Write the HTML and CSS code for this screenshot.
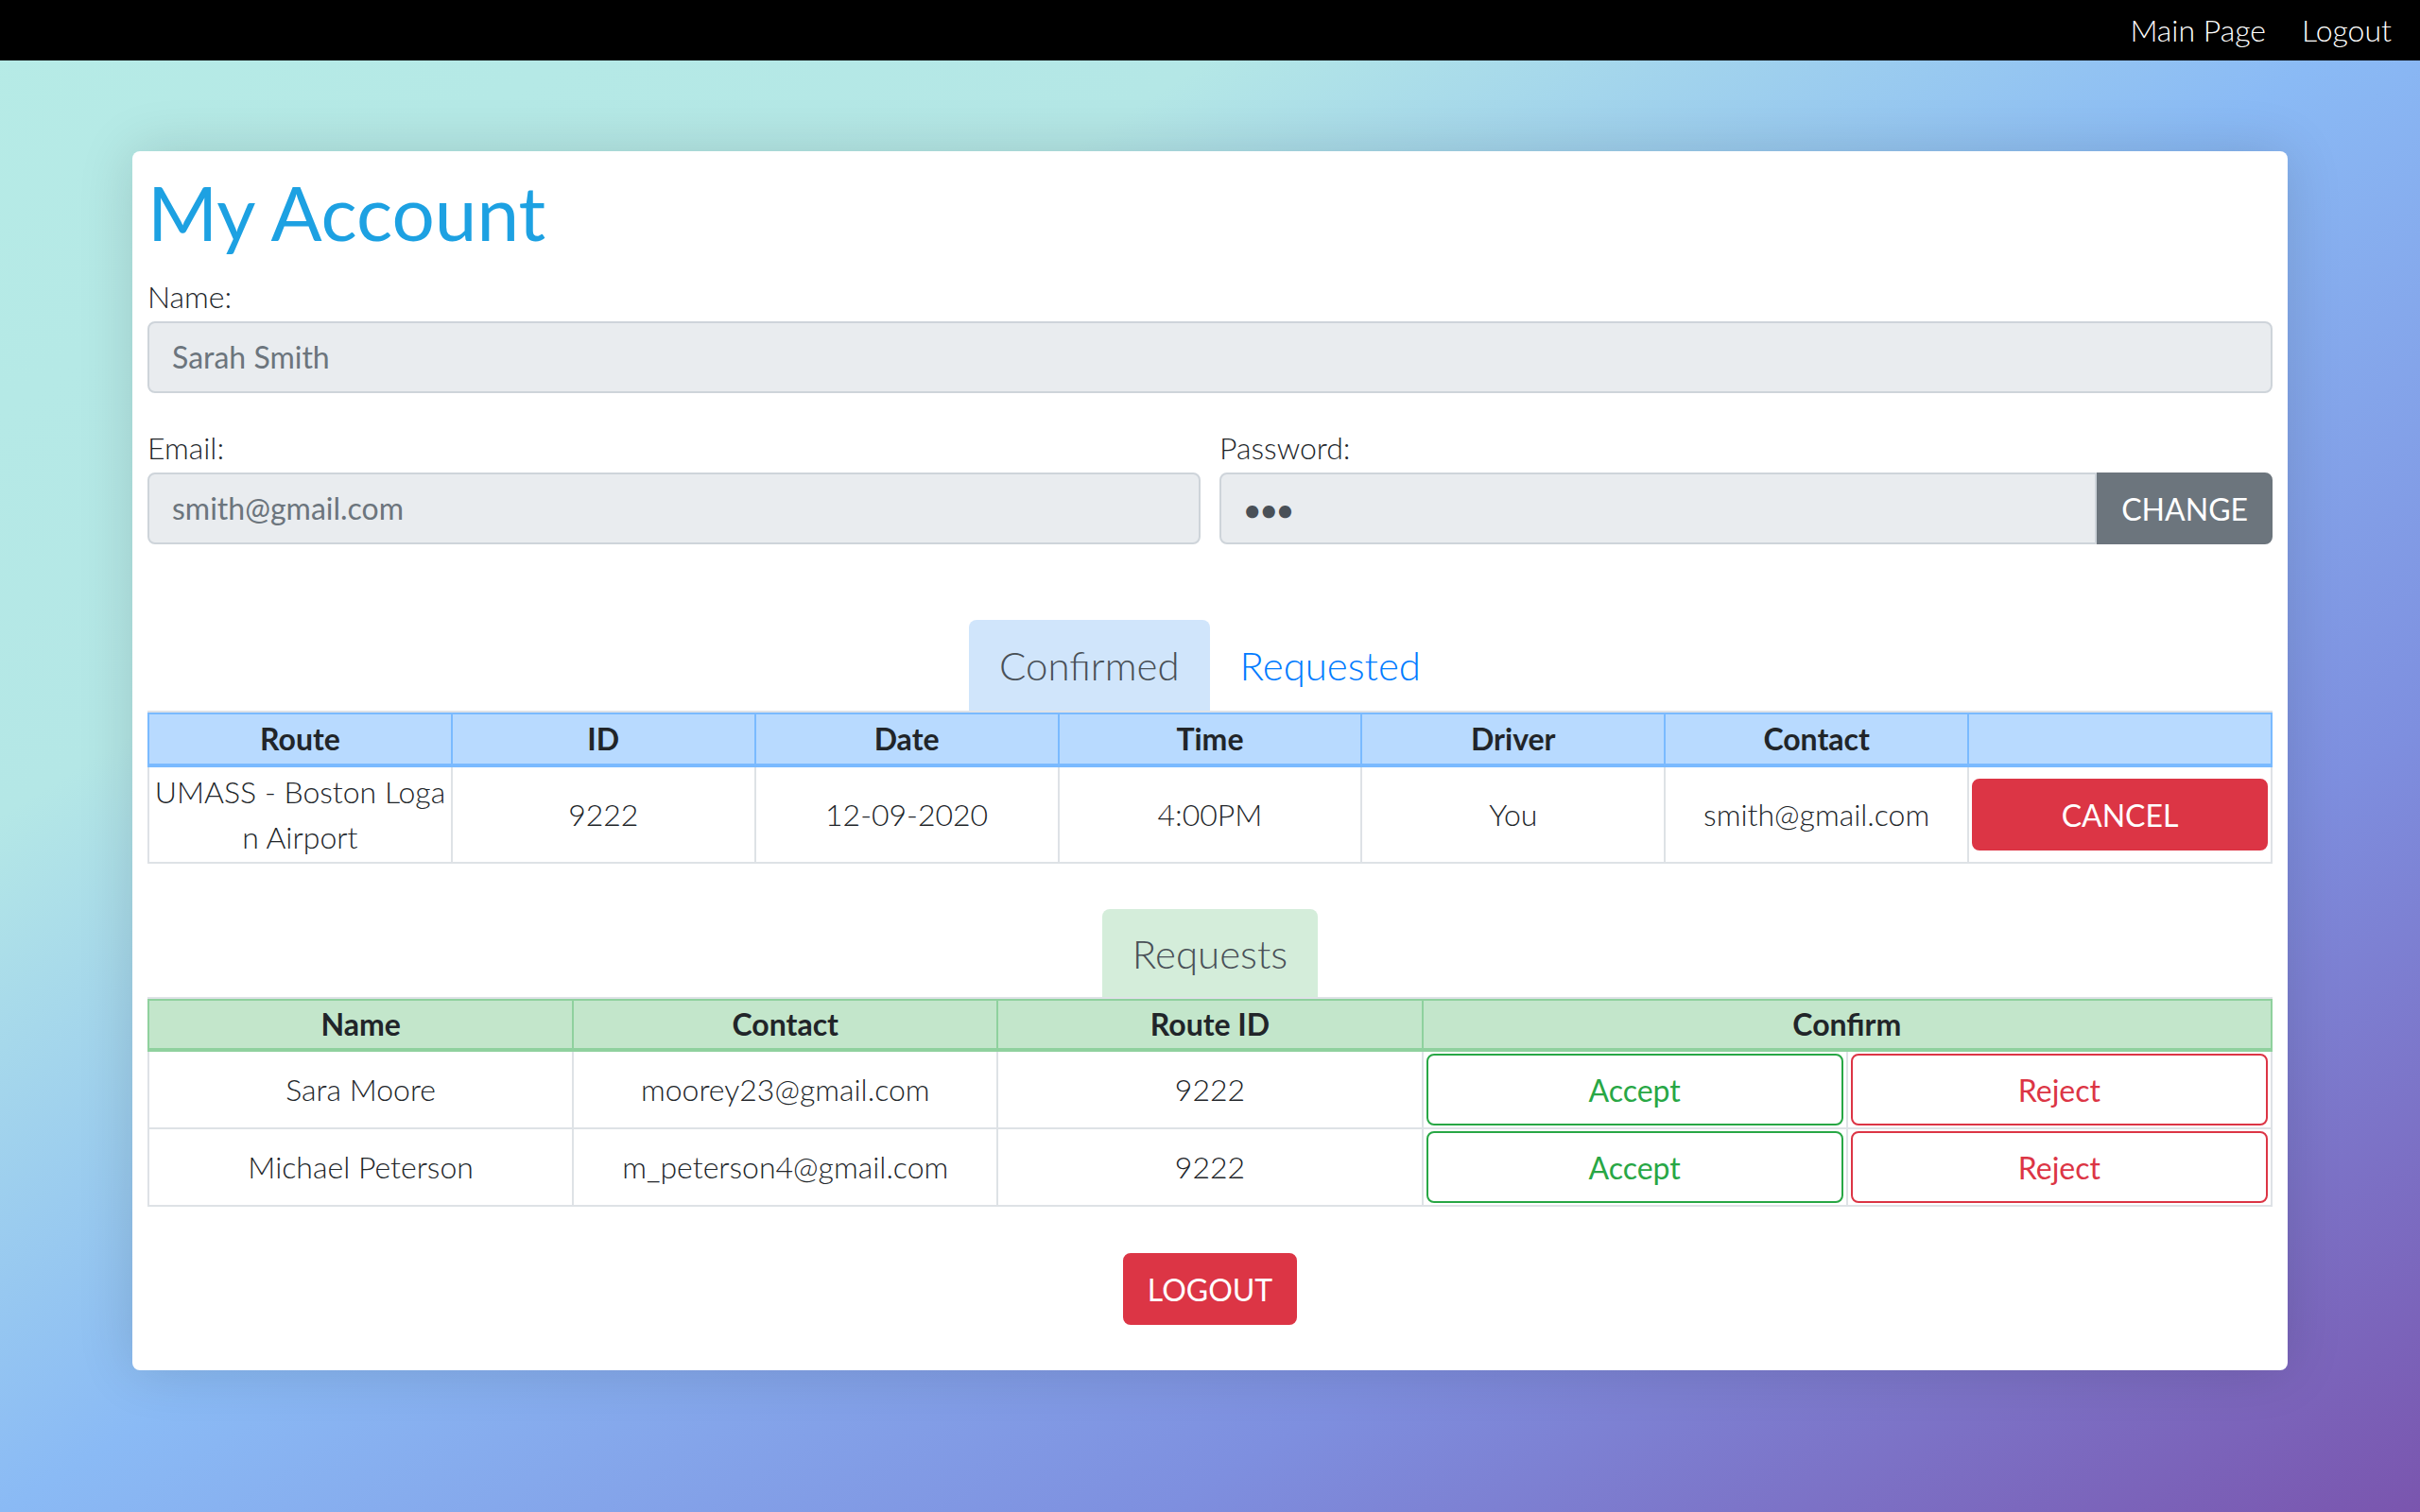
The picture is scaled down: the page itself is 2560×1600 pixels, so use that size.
FILE: index.html
```html
<!DOCTYPE html>
<html lang="en">
<head>
<meta charset="utf-8">
<title>My Account</title>
<link rel="stylesheet" href="styles.css">
</head>
<body>
<nav class="navbar">
  <a class="nav-link" href="#">Main Page</a>
  <a class="nav-link" href="#">Logout</a>
</nav>
<main class="container">
  <section class="card">
    <h1 class="title">My Account</h1>
    <div class="form-group">
      <label class="label">Name:</label>
      <div class="field">Sarah Smith</div>
    </div>
    <div class="form-row">
      <div class="form-group">
        <label class="label">Email:</label>
        <div class="field">smith@gmail.com</div>
      </div>
      <div class="form-group">
        <label class="label">Password:</label>
        <div class="input-group">
          <div class="field field-pw"><span class="dots">&bull;&bull;&bull;</span></div>
          <button class="btn-change">CHANGE</button>
        </div>
      </div>
    </div>

    <ul class="tabs">
      <li class="tab tab-blue">Confirmed</li>
      <li class="tab tab-link">Requested</li>
    </ul>
    <div class="table-wrap">
      <table class="table table-primary">
        <thead>
          <tr><th>Route</th><th>ID</th><th>Date</th><th>Time</th><th>Driver</th><th>Contact</th><th></th></tr>
        </thead>
        <tbody>
          <tr>
            <td class="route">UMASS - Boston Logan Airport</td>
            <td>9222</td>
            <td>12-09-2020</td>
            <td>4:00PM</td>
            <td>You</td>
            <td>smith@gmail.com</td>
            <td><button class="btn btn-danger">CANCEL</button></td>
          </tr>
        </tbody>
      </table>
    </div>

    <ul class="tabs tabs-gap">
      <li class="tab tab-green">Requests</li>
    </ul>
    <div class="table-wrap">
      <table class="table table-success">
        <colgroup><col><col><col><col><col></colgroup>
        <thead>
          <tr><th>Name</th><th>Contact</th><th>Route ID</th><th colspan="2">Confirm</th></tr>
        </thead>
        <tbody>
          <tr>
            <td>Sara Moore</td>
            <td>moorey23@gmail.com</td>
            <td>9222</td>
            <td><button class="btn btn-outline-success">Accept</button></td>
            <td><button class="btn btn-outline-danger">Reject</button></td>
          </tr>
          <tr>
            <td>Michael Peterson</td>
            <td>m_peterson4@gmail.com</td>
            <td>9222</td>
            <td><button class="btn btn-outline-success">Accept</button></td>
            <td><button class="btn btn-outline-danger">Reject</button></td>
          </tr>
        </tbody>
      </table>
    </div>

    <div class="logout-wrap">
      <button class="btn-logout">LOGOUT</button>
    </div>
  </section>
</main>
</body>
</html>
```

FILE: styles.css
```css
* { box-sizing: border-box; }

html, body { margin: 0; padding: 0; }

body {
  min-height: 1600px;
  font-family: Lato, "Noto Sans", sans-serif;
  font-weight: 300;
  font-size: 32px;
  line-height: 1.5;
  color: #212529;
  background: linear-gradient(to bottom right, #b6ebe6 0%, #b4e7e6 27%, #8abaf5 50%, #7e8fdf 74%, #7a55ae 100%);
}

.navbar {
  height: 64px;
  background: #000;
  display: flex;
  justify-content: flex-end;
  align-items: center;
  padding: 0 14px 0 16px;
}

.nav-link {
  color: #fff;
  text-decoration: none;
  line-height: 48px;
  padding: 8px 19px 8px 19px;
  font-weight: 300;
}
.nav-link:last-child { padding-right: 16px; }

.container {
  width: 2280px;
  margin: 96px auto 0;
}

.card {
  background: #fff;
  border-radius: 8px;
  padding: 16px 16px 48px;
  box-shadow: 0 0 60px rgba(0, 0, 0, 0.14);
}

.title {
  margin: 0 0 18px;
  font-size: 80px;
  line-height: 1.2;
  font-weight: 400;
  color: #1da1e2;
}

.form-group { margin-bottom: 32px; }

.label {
  display: block;
  margin: 2px 0;
  line-height: 48px;
}

.form-row {
  display: grid;
  grid-template-columns: 1fr 1fr;
  column-gap: 20px;
}

.field {
  height: 76px;
  background: #e9ecef;
  border: 2px solid #ced4da;
  border-radius: 8px;
  padding: 0 24px;
  display: flex;
  align-items: center;
  color: #6c757d;
  font-weight: 400;
}

.input-group { display: flex; }
.input-group .field {
  flex: 1;
  border-radius: 8px 0 0 8px;
}
.dots {
  color: #495057;
  font-size: 30px;
  letter-spacing: 0;
  font-weight: 700;
  position: relative;
  top: 1px;
}

.btn-change {
  height: 76px;
  padding: 0 24px;
  border: 2px solid #6c757d;
  border-radius: 0 8px 8px 0;
  background: #6c757d;
  color: #fff;
  font-family: inherit;
  font-size: 32px;
  font-weight: 400;
}

.tabs {
  display: flex;
  justify-content: center;
  list-style: none;
  margin: 48px 0 0;
  padding: 0;
}

.tab {
  font-size: 42px;
  line-height: 62px;
  padding: 17px 32px 17px;
  border-radius: 8px 8px 0 0;
  color: #495057;
}
.tab-blue { background: #d0e5fb; }
.tab-green {
  background: #d4edda;
  padding: 16px 32px 15px;
}
.tab-link { color: #007bff; }
.tabs-gap { margin-top: 48px; }

.table-wrap { border-top: 2px solid #dee2e6; }

.table {
  width: 100%;
  border-collapse: collapse;
  table-layout: fixed;
  text-align: center;
}

.table th,
.table td {
  border: 2px solid #dee2e6;
  padding: 2px 3px;
  line-height: 48px;
  vertical-align: middle;
}
.table th { font-weight: 700; }

.table-primary thead th {
  background: #b8daff;
  border-color: #7abaff;
  border-bottom-width: 4px;
}
.table-success thead th {
  background: #c3e6cb;
  border-color: #8fd19e;
  border-bottom-width: 4px;
  padding: 1px 3px;
}

.route { word-break: break-all; }

.btn {
  display: block;
  width: 100%;
  height: 76px;
  border: 2px solid transparent;
  border-radius: 8px;
  font-family: inherit;
  font-size: 32px;
  font-weight: 400;
  background: #fff;
}
.btn-danger { background: #dc3545; border-color: #dc3545; color: #fff; }
.btn-outline-success { color: #28a745; border-color: #28a745; }
.btn-outline-danger { color: #dc3545; border-color: #dc3545; }

.logout-wrap {
  display: flex;
  justify-content: center;
  margin-top: 49px;
}

.btn-logout {
  height: 76px;
  padding: 0 24px;
  border: 2px solid #dc3545;
  border-radius: 8px;
  background: #dc3545;
  color: #fff;
  font-family: inherit;
  font-size: 32px;
  font-weight: 400;
}
```
